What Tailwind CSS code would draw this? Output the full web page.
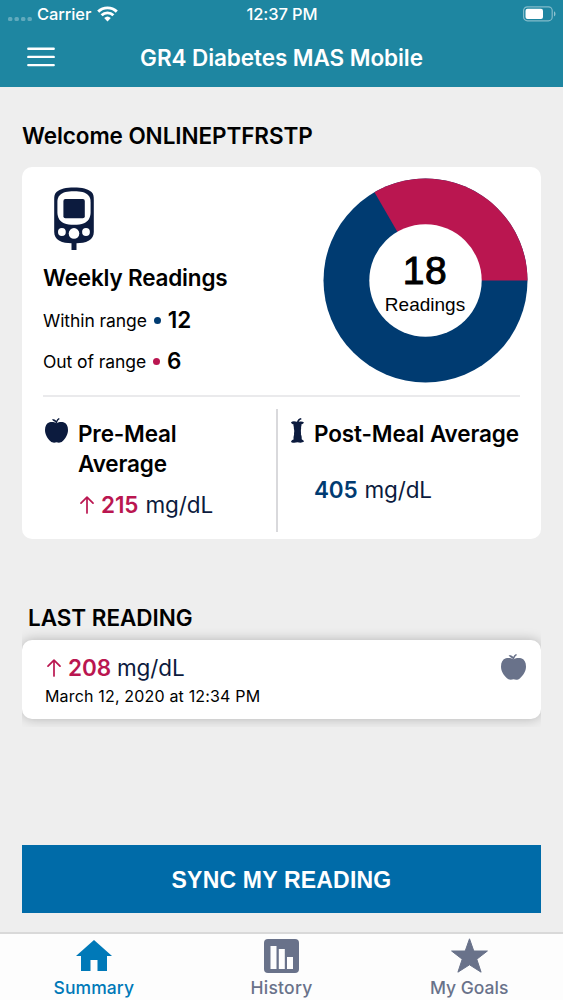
<!DOCTYPE html>
<html lang="en">
<head>
    <meta charset="UTF-8">
    <meta name="viewport" content="width=device-width, initial-scale=1.0">
    <title>GR4 Diabetes MAS Mobile</title>
    <script src="https://cdn.jsdelivr.net/npm/@tailwindcss/browser@4"></script>
</head>
<body class="bg-[#eeeeee] font-['Inter','Liberation_Sans',sans-serif] text-black">
    <div class="w-[563px] h-[1000px] flex flex-col overflow-hidden">
        <!-- Status bar + title -->
        <header class="h-[87px] shrink-0 bg-[#1e86a1] text-white">
            <div class="h-7 grid grid-cols-3 items-center pl-2 pr-[7px] text-[16.5px] leading-7 font-medium tracking-[-0.1px]">
                <div class="flex items-center">
                    <svg class="w-6 h-1 mt-2.5" viewBox="0 0 24 4" fill="#fff" fill-opacity="0.3">
                        <rect x="0" y="0" width="4.4" height="4" rx="1.5"/>
                        <rect x="6.5" y="0" width="4.4" height="4" rx="1.5"/>
                        <rect x="13" y="0" width="4.4" height="4" rx="1.5"/>
                        <rect x="19.5" y="0" width="4.4" height="4" rx="1.5"/>
                    </svg>
                    <span class="ml-[5px] w-[54px] whitespace-nowrap">Carrier</span>
                    <svg class="ml-[6px] w-[21px] h-[16px]" viewBox="0 0 21 16" fill="none" stroke="#fff" stroke-width="2.9">
                        <path d="M1.2 5.6A13.4 13.4 0 0 1 19.8 5.6"/>
                        <path d="M4.6 9.3A8.4 8.4 0 0 1 16.4 9.3"/>
                        <path d="M10.5 15.4L7.2 12A4.8 4.8 0 0 1 13.8 12Z" fill="#fff" stroke="none"/>
                    </svg>
                </div>
                <div class="text-center">12:37 PM</div>
                <svg class="justify-self-end w-[33px] h-4" viewBox="0 0 33 16">
                    <rect x="0.6" y="0.8" width="28.6" height="14" rx="3.8" fill="none" stroke="#fff" stroke-opacity="0.45" stroke-width="1.2"/>
                    <rect x="2.5" y="2.7" width="17.5" height="10.2" rx="2" fill="#fff"/>
                    <path d="M31 5.3A3 3 0 0 1 31 10.5Z" fill="#fff" fill-opacity="0.5"/>
                </svg>
            </div>
            <div class="relative h-[59px] flex items-center justify-center">
                <svg class="absolute left-[27px] top-[19px] w-7 h-5" viewBox="0 0 28 20" stroke="#fff" stroke-width="2.4" stroke-linecap="round">
                    <path d="M1.3 1.7H26.7M1.3 9.9H26.7M1.3 18.1H26.7"/>
                </svg>
                <h1 class="text-[22.5px] font-semibold tracking-[-0.07px] whitespace-nowrap">GR4 Diabetes MAS Mobile</h1>
            </div>
        </header>

        <main class="flex-1 px-[22px]">
            <h2 class="mt-[34px] h-[30px] leading-[30px] text-[22.5px] font-semibold tracking-[-0.08px] whitespace-nowrap">Welcome ONLINEPTFRSTP</h2>

            <!-- Weekly summary -->
            <section class="mt-[16px] h-[372px] rounded-[10px] bg-white">
                <div class="h-[230px] mx-[21px] flex justify-between border-b-2 border-[#eaeaec]">
                    <div class="pt-[20px]">
                        <svg class="ml-[11px] w-10 h-[63px]" viewBox="0 0 40 63">
                            <path fill="#0c1b3e" d="M20 0.4C28 0.4 34 1.8 37.5 5C39.5 7 39.8 9 39.8 13V45C39.8 49 38 51.5 35 53.5C31 55.8 27 56.2 22.5 56.2V63H17.5V56.2C13 56.2 9 55.8 5 53.5C2 51.5 0.2 49 0.2 45V13C0.2 9 0.5 7 2.5 5C6 1.8 12 0.4 20 0.4Z"/>
                            <path fill="#fff" d="M20 4.2C27 4.2 31 5 34 8C36 10 36.6 12 36.6 15V25C36.6 31 34 34.5 30 36.3C27 37.6 24 37.8 20 37.8C16 37.8 13 37.6 10 36.3C6 34.5 3.4 31 3.4 25V15C3.4 12 4 10 6 8C9 5 13 4.2 20 4.2Z"/>
                            <rect x="9.4" y="12" width="21.4" height="19.2" rx="2" fill="#0c1b3e"/>
                            <circle cx="7.9" cy="45" r="3.9" fill="#fff"/>
                            <circle cx="20" cy="46.4" r="5.3" fill="#fff"/>
                            <circle cx="32" cy="45" r="3.9" fill="#fff"/>
                        </svg>
                        <h3 class="mt-[13px] h-[30px] leading-[30px] text-[22.5px] font-semibold tracking-[-0.18px] whitespace-nowrap">Weekly Readings</h3>
                        <p class="mt-[10px] h-[34px] flex items-center text-[17.5px] tracking-[-0.08px] whitespace-nowrap">
                            <span class="pt-[2px]">Within range</span>
                            <span class="ml-[7px] mr-[7px] size-[7px] rounded-full bg-[#003b71]"></span>
                            <b class="text-[22.5px] font-semibold">12</b>
                        </p>
                        <p class="mt-[7px] h-[34px] flex items-center text-[17.5px] tracking-[-0.08px] whitespace-nowrap">
                            <span class="pt-[2px]">Out of range</span>
                            <span class="ml-[7px] mr-[7px] size-[7px] rounded-full bg-[#ba1650]"></span>
                            <b class="text-[22.5px] font-semibold">6</b>
                        </p>
                    </div>
                    <div class="relative mt-[11px] -mr-[8px] size-[206px]">
                        <svg class="size-[206px]" viewBox="-103.5 -102.5 206 206">
                            <circle r="102" fill="#003b71"/>
                            <path d="M0 0L-51 -88.33A102 102 0 0 1 102 0Z" fill="#ba1650"/>
                            <circle r="56.2" fill="#fff"/>
                        </svg>
                        <div class="absolute inset-0 flex flex-col items-center font-['Liberation_Sans',sans-serif]">
                            <span class="mt-[71px] h-[44px] leading-[44px] text-[39px] tracking-[0.5px] [-webkit-text-stroke:1px_black]">18</span>
                            <span class="h-[24px] leading-[24px] text-[19px]">Readings</span>
                        </div>
                    </div>
                </div>
                <div class="h-[142px] pt-[12px] flex">
                    <div class="w-[256px] h-[123px] flex pl-[23px] border-r-2 border-[#d9d9dc]">
                        <svg class="mt-[9px] w-[23px] h-[25px] shrink-0" viewBox="0 0 23 25" fill="#0c1b3e">
                            <path d="M11.5 5.2C13.5 4 16 3.5 18.5 4.2C21.5 5.2 23 8 23 12C23 16.5 20.5 20.5 17.5 23.2C15.8 24.8 13.8 25 11.5 24.2C9.2 25 7.2 24.8 5.5 23.2C2.5 20.5 0 16.5 0 12C0 8 1.5 5.2 4.5 4.2C7 3.5 9.5 4 11.5 5.2Z"/>
                            <path d="M10.8 5.5L10.4 4C9 3.7 7.8 2.8 7 1.3C8.9 1 10.5 1.6 11.2 2.9C11.8 1.7 12.6 0.7 13.8 0L14.8 0.9C13.2 1.8 12.2 3.3 12 5.5Z"/>
                        </svg>
                        <div class="ml-[10px]">
                            <h3 class="mt-[10px] w-[140px] text-[22.5px] leading-[30px] font-semibold tracking-[-0.15px]">Pre-Meal Average</h3>
                            <p class="mt-[11px] h-[30px] flex items-center text-[22.5px] leading-[30px] tracking-[-0.1px] text-[#0c1b3e] whitespace-nowrap">
                                <svg class="ml-[2px] mr-[7px] w-[14px] h-[18px]" viewBox="0 0 14 18" fill="none" stroke="#ba1650" stroke-width="1.7" stroke-linecap="round" stroke-linejoin="round"><path d="M7 17V1.2M1 7.2L7 1.2L13 7.2"/></svg>
                                <b class="mr-[7px] font-semibold text-[#ba1650]">215</b>mg/dL
                            </p>
                        </div>
                    </div>
                    <div class="flex pl-[13px]">
                        <svg class="mt-[9px] w-[13px] h-[25px] shrink-0" viewBox="0 0 13 25" fill="#0c1b3e">
                            <path d="M0 4.2C1.5 3 4 3.2 6 3.8C6.5 2 7.8 0.3 10 0L10.6 1.2C8.8 1.8 8 2.8 7.8 3.8C9.5 3.2 11.5 3.2 13 4.4C12.4 5.8 11.3 6 10.4 6.3C10.6 7.6 10.4 8.3 10 9C10.5 10.3 9.8 11 9.9 12.5C9.8 14 10.2 15 9.9 16.3C10.3 17.5 10.9 18.5 10.7 21.2C11.6 21.7 12.8 22.3 13 23.6C11 25.2 8.5 24.7 6.5 24.3C4.5 24.8 2 25.2 0 23.9C0.3 22.4 1.5 21.8 2.6 21.4C2.3 19 2.8 18 3.1 16.5C2.8 15 3.4 14 3.2 12.5C3.2 11 2.5 10.4 2.9 9C2.5 8.2 2.3 7.5 2.6 6.4C1.6 6 0.4 5.6 0 4.2Z"/>
                        </svg>
                        <div class="ml-[10px]">
                            <h3 class="mt-[10px] text-[22.5px] leading-[30px] font-semibold tracking-[-0.13px] whitespace-nowrap">Post-Meal Average</h3>
                            <p class="mt-[26px] flex text-[22.5px] leading-[30px] tracking-[-0.15px] text-[#0c1b3e]"><b class="mr-[7px] font-semibold text-[#003b71]">405</b>mg/dL</p>
                        </div>
                    </div>
                </div>
            </section>

            <!-- Last reading -->
            <h2 class="mt-[64px] pl-1.5 h-[30px] leading-[30px] text-[22.5px] font-semibold tracking-[-0.05px]">LAST READING</h2>
            <div class="-mt-[5px] h-[99px] py-3 overflow-hidden">
                <section class="h-[79px] rounded-[10px] bg-white shadow-[0_0_12px_rgba(0,0,0,0.25)] flex justify-between pl-[23px] pr-[15px]">
                    <div class="pt-[13px]">
                        <p class="h-[30px] flex items-center text-[22.5px] leading-[30px] tracking-[-0.1px] text-[#0c1b3e] whitespace-nowrap">
                            <svg class="ml-[2px] mr-[7px] w-[14px] h-[18px]" viewBox="0 0 14 18" fill="none" stroke="#ba1650" stroke-width="1.7" stroke-linecap="round" stroke-linejoin="round"><path d="M7 17V1.2M1 7.2L7 1.2L13 7.2"/></svg>
                            <b class="mr-[6px] font-semibold text-[#ba1650]">208</b>mg/dL
                        </p>
                        <p class="mt-px text-[16px] leading-6 tracking-[0.17px] whitespace-nowrap">March 12, 2020 at 12:34 PM</p>
                    </div>
                    <svg class="mt-[14px] w-[25px] h-[26px]" viewBox="0 0 23 25" preserveAspectRatio="none" fill="#69728a">
                        <path d="M11.5 5.2C13.5 4 16 3.5 18.5 4.2C21.5 5.2 23 8 23 12C23 16.5 20.5 20.5 17.5 23.2C15.8 24.8 13.8 25 11.5 24.2C9.2 25 7.2 24.8 5.5 23.2C2.5 20.5 0 16.5 0 12C0 8 1.5 5.2 4.5 4.2C7 3.5 9.5 4 11.5 5.2Z"/>
                        <path d="M10.8 5.5L10.4 4C9 3.7 7.8 2.8 7 1.3C8.9 1 10.5 1.6 11.2 2.9C11.8 1.7 12.6 0.7 13.8 0L14.8 0.9C13.2 1.8 12.2 3.3 12 5.5Z"/>
                    </svg>
                </section>
            </div>

            <button class="mt-[118px] block w-full h-[68px] pt-[2px] bg-[#006ba8] text-white text-[23px] tracking-[0.2px] font-bold font-['Liberation_Sans',sans-serif]">SYNC MY READING</button>
        </main>

        <!-- Tab bar -->
        <nav class="h-[68px] shrink-0 border-t-2 border-[#d9d9d9] bg-[#fdfdfd] grid grid-cols-3 text-[17.5px] font-medium text-[#69728a]">
            <a class="flex flex-col items-center text-[#0079b8]">
                <svg class="mt-[6px] w-[36px] h-[31px]" viewBox="0 0 36 31" fill="currentColor"><path d="M18 0L36 16H31V31H21.5V20H14.5V31H5V16H0Z"/></svg>
                <span class="mt-[5px] leading-6 tracking-[0.08px]">Summary</span>
            </a>
            <a class="flex flex-col items-center">
                <svg class="mt-[5px] w-[35px] h-[35px]" viewBox="0 0 35 35"><rect width="35" height="34" rx="4" fill="currentColor"/><path fill="#fdfdfd" d="M6.5 7H12.5V30H6.5ZM14.8 10H20.8V30H14.8ZM23 18H29V30H23Z"/></svg>
                <span class="mt-[2px] leading-6 tracking-[0.25px]">History</span>
            </a>
            <a class="flex flex-col items-center">
                <svg class="mt-[4px] w-[37px] h-[35px]" viewBox="0 0 37 35" fill="currentColor" stroke="currentColor" stroke-width="1" stroke-linejoin="round"><path d="M18.5 0.8L22.8 13H36.4L25.8 21.2L30.1 34.2L18.5 26.8L6.9 34.2L11.2 21.2L0.6 13H14.2Z"/></svg>
                <span class="mt-[3px] leading-6">My Goals</span>
            </a>
        </nav>
    </div>
</body>
</html>
